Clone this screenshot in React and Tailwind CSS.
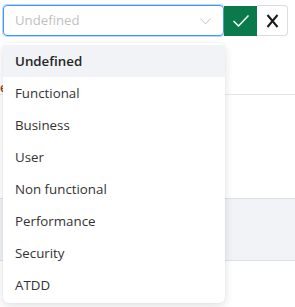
import { useState } from 'react';

const options = [
  'Undefined',
  'Functional',
  'Business',
  'User',
  'Non functional',
  'Performance',
  'Security',
  'ATDD',
];

export default function App() {
  const [selected, setSelected] = useState('Undefined');

  return (
    <div
      className="relative w-[295px] h-[307px] overflow-hidden bg-white text-[#262626]"
      style={{ fontFamily: '"Open Sans", "Liberation Sans", sans-serif' }}
    >
      {/* Edit row */}
      <div className="flex pt-[5px] pl-[3px]">
        <div className="flex items-center w-[221px] h-[31px] rounded-[4px] border border-[#4096ff] ring-1 ring-[#bcd8ff] pl-[11px] pr-[12px] pt-[1px]">
          <span className="flex-1 text-[13.2px] text-[#bfbfbf]">Undefined</span>
          <svg width="11" height="7" viewBox="0 0 11 7" fill="none">
            <path d="M0.5 0.5L5.5 6L10.5 0.5" stroke="#c4c4c4" strokeWidth="1" />
          </svg>
        </div>
        <button className="flex items-center justify-center w-[33px] h-[30px] mt-[1px] bg-[#0b7a4b]">
          <svg width="18" height="14" viewBox="0 0 18 14" fill="none">
            <path d="M1.5 7L6.5 12L16.5 1.5" stroke="white" strokeWidth="1.5" />
          </svg>
        </button>
        <button className="flex items-center justify-center w-[31px] h-[31px] border border-[#dcdcdc] border-l-0 rounded-r-[4px] bg-white">
          <svg width="13" height="14" viewBox="0 0 13 14" fill="none">
            <path d="M1.5 1L11.5 13M11.5 1L1.5 13" stroke="#1a1a1a" strokeWidth="2" />
          </svg>
        </button>
      </div>

      {/* Page behind the dropdown */}
      <div className="mt-[45px] h-[14px] border-b border-[#e3e6ea]">
        <span className="block text-[12px] leading-[13px] font-semibold text-[#9a3412]">e</span>
      </div>
      <div className="mt-[103px] h-[63px] bg-[#f2f3f7] border-y border-[#dde1e7]" />

      {/* Dropdown */}
      <div className="absolute left-[3px] top-[43px] w-[222px] rounded-[6px] bg-white py-[2px] shadow-[0_3px_10px_rgba(0,0,0,0.12),0_0_2px_rgba(0,0,0,0.06)]">
        {options.map((opt) => (
          <div
            key={opt}
            onClick={() => setSelected(opt)}
            className={`flex items-center h-[32px] px-[12px] pt-[2px] text-[13.3px] ${
              selected === opt ? 'bg-[#f2f3f6] font-semibold text-[#262626]' : 'text-[#333333]'
            }`}
          >
            {opt}
          </div>
        ))}
      </div>
    </div>
  );
}
